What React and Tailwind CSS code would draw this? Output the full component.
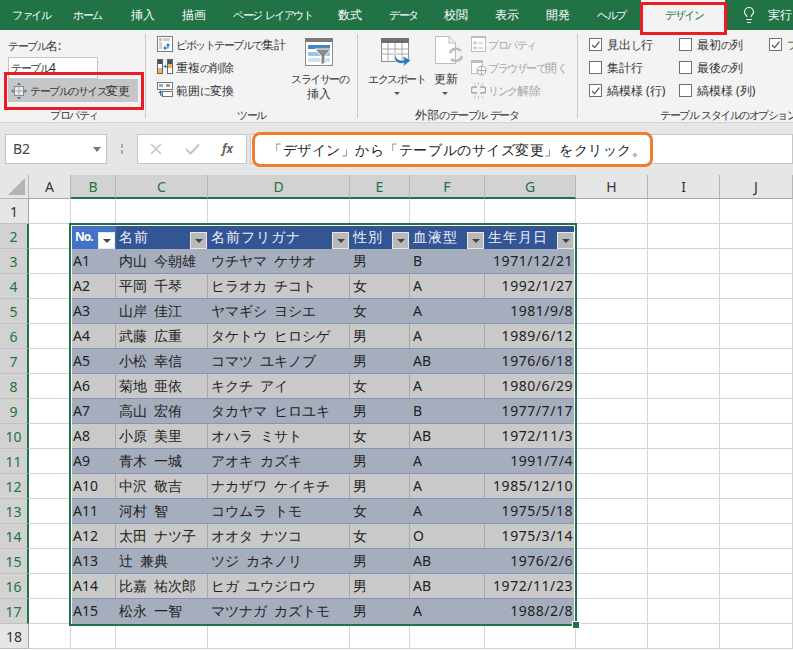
import { Lightbulb } from "lucide-react";

const font = "font-['Noto_Sans_CJK_JP','Noto_Sans',sans-serif]";

const tabs = [
  ["ファイル", 12],
  ["ホーム", 73],
  ["挿入", 131],
  ["描画", 182],
  ["ページ レイアウト", 233],
  ["数式", 338],
  ["データ", 389],
  ["校閲", 444],
  ["表示", 495],
  ["開発", 546],
  ["ヘルプ", 597],
];

const rows = [
  ["A1", "内山 今朝雄", "ウチヤマ ケサオ", "男", "B", "1971/12/21"],
  ["A2", "平岡 千琴", "ヒラオカ チコト", "女", "A", "1992/1/27"],
  ["A3", "山岸 佳江", "ヤマギシ ヨシエ", "女", "A", "1981/9/8"],
  ["A4", "武藤 広重", "タケトウ ヒロシゲ", "男", "A", "1989/6/12"],
  ["A5", "小松 幸信", "コマツ ユキノブ", "男", "AB", "1976/6/18"],
  ["A6", "菊地 亜依", "キクチ アイ", "女", "A", "1980/6/29"],
  ["A7", "高山 宏侑", "タカヤマ ヒロユキ", "男", "B", "1977/7/17"],
  ["A8", "小原 美里", "オハラ ミサト", "女", "AB", "1972/11/3"],
  ["A9", "青木 一城", "アオキ カズキ", "男", "A", "1991/7/4"],
  ["A10", "中沢 敬吉", "ナカザワ ケイキチ", "男", "A", "1985/12/10"],
  ["A11", "河村 智", "コウムラ トモ", "女", "A", "1975/5/18"],
  ["A12", "太田 ナツ子", "オオタ ナツコ", "女", "O", "1975/3/14"],
  ["A13", "辻 兼典", "ツジ カネノリ", "男", "AB", "1976/2/6"],
  ["A14", "比嘉 祐次郎", "ヒガ ユウジロウ", "男", "AB", "1972/11/23"],
  ["A15", "松永 一智", "マツナガ カズトモ", "男", "A", "1988/2/8"],
];

const heads = [
  ["No.", 44],
  ["名前", 92],
  ["名前フリガナ", 142],
  ["性別", 60],
  ["血液型", 75],
  ["生年月日", 89],
];

const colHeads = ["A", "B", "C", "D", "E", "F", "G", "H", "I", "J"];
const rowNums = Array.from({ length: 18 }, (_, i) => i + 1);

// ribbon font has narrow kana and full width kanji
const Jp = ({ text }) =>
  text.split(/([\u3040-\u30ff]+)/).map((part, i) =>
    i % 2 === 1 ? (
      <span key={i} className="text-[11px] tracking-[-1.5px]">
        {part}
      </span>
    ) : (
      <span key={i}>{part}</span>
    )
  );

const Label = ({ x, y, gray, children }) => (
  <span
    style={{ left: x, top: y }}
    className={`absolute whitespace-nowrap text-[12px] leading-[16px] ${gray ? "text-[#a6a6a6]" : "text-[#333]"}`}
  >
    <Jp text={children} />
  </span>
);

const Check = ({ x, y, on }) => (
  <span
    style={{ left: x, top: y }}
    className="absolute w-[13px] h-[13px] border border-[#707070] bg-white"
  >
    {on && (
      <svg viewBox="0 0 13 13" className="w-[13px] h-[13px] -top-px -left-px absolute">
        <path d="M3 7 L5.6 9.6 L10.4 3.6" fill="none" stroke="#555" strokeWidth="1.3" />
      </svg>
    )}
  </span>
);

const Caret = ({ x, y }) => (
  <span
    style={{ left: x, top: y }}
    className="absolute border-x-[3px] border-x-transparent border-t-[3px] border-t-[#555]"
  ></span>
);

const Sep = ({ x }) => (
  <div style={{ left: x }} className="absolute top-[34px] h-[84px] w-px bg-[#c8c8c8]"></div>
);

const PivotIcon = () => (
  <svg className="absolute left-[157px] top-[36px]" width="16" height="16" viewBox="0 0 16 16">
    <rect x="0.5" y="0.5" width="15" height="15" fill="#fff" stroke="#7a7a7a" />
    <rect x="2" y="2" width="3" height="3" fill="#bdbdbd" />
    <rect x="2" y="6" width="3" height="7" fill="#d0d0d0" />
    <rect x="6" y="2" width="7" height="3" fill="#d0d0d0" />
    <path d="M7 12 H11 V8 M9.5 9.5 L11 8 L12.5 9.5 M8.5 10.5 L7 12 L8.5 13.5" fill="none" stroke="#2f75b5" strokeWidth="1.2" />
  </svg>
);

const DupIcon = () => (
  <svg className="absolute left-[157px] top-[59px]" width="16" height="15" viewBox="0 0 16 15">
    <rect x="0.5" y="0.5" width="5" height="14" fill="#fff" stroke="#666" />
    <rect x="10.5" y="0.5" width="5" height="14" fill="#fff" stroke="#666" />
    <rect x="1" y="1" width="4" height="4" fill="#44546a" />
    <rect x="1" y="9" width="4" height="5" fill="#e9b362" />
    <rect x="11" y="1" width="4" height="4" fill="#44546a" />
    <rect x="11" y="5" width="4" height="4" fill="#e9b362" />
    <path d="M6.5 7.5 H9.5 M8.2 6 L9.5 7.5 L8.2 9" fill="none" stroke="#2f75b5" />
  </svg>
);

const RangeIcon = () => (
  <svg className="absolute left-[157px] top-[82px]" width="16" height="16" viewBox="0 0 16 16">
    <rect x="0.5" y="0.5" width="15" height="7" fill="#fff" stroke="#777" />
    <rect x="2" y="2" width="4" height="3" fill="#8faadc" />
    <rect x="9" y="2" width="4" height="3" fill="#9a9a9a" />
    <rect x="5.5" y="9.5" width="10" height="5" fill="#fff" stroke="#777" />
    <path d="M3.5 9 V13 H6 M1.8 11 L3.5 9 L5.2 11" fill="none" stroke="#2f75b5" strokeWidth="1.1" />
  </svg>
);

const SlicerIcon = () => (
  <svg className="absolute left-[305px] top-[38px]" width="28" height="28" viewBox="0 0 28 28">
    <rect x="0.5" y="0.5" width="27" height="27" fill="#fff" stroke="#8c8c8c" />
    <rect x="0" y="0" width="28" height="4" fill="#7a7a7a" />
    <rect x="3" y="7" width="22" height="4" fill="#4a86c0" />
    <rect x="3" y="14" width="22" height="4" fill="#9dc3e6" />
    <rect x="3" y="20" width="22" height="4" fill="#cfe0f1" />
    <path d="M10 11 H26 L20 18 V25 L16 27 V18 Z" fill="#8a8a8a" stroke="#fff" />
  </svg>
);

const ExportIcon = () => (
  <svg className="absolute left-[381px] top-[38px]" width="32" height="30" viewBox="0 0 32 30">
    <rect x="0.5" y="0.5" width="27" height="23" fill="#fff" stroke="#8c8c8c" />
    <rect x="0" y="0" width="28" height="5" fill="#6f6f6f" />
    <path d="M0 11 H28 M0 16 H28 M7 5 V24 M14 5 V24 M21 5 V24" stroke="#a6a6a6" />
    <path d="M14 15 C15 22 19 23 23 22 L21 18 L30 22 L22 29 L23 25 C17 27 12 23 14 15 Z" fill="#2f75b5" stroke="#fff" strokeWidth="0.6" />
  </svg>
);

const RefreshIcon = () => (
  <svg className="absolute left-[435px] top-[36px]" width="28" height="30" viewBox="0 0 28 30">
    <path d="M0.5 0.5 H14 L20.5 7 V27.5 H0.5 Z M14 0.5 V7 H20.5" fill="#fff" stroke="#bdbdbd" />
    <path d="M15 17 A6.5 6.5 0 0 1 26 15 M27 20 A6.5 6.5 0 0 1 16 23" fill="none" stroke="#bdbdbd" strokeWidth="2.6" />
  </svg>
);

const SmallGrayIcons = () => (
  <>
    <svg className="absolute left-[471px] top-[36px]" width="15" height="16" viewBox="0 0 15 16">
      <rect x="0.5" y="0.5" width="14" height="15" fill="#fff" stroke="#bdbdbd" />
      <rect x="0" y="0" width="15" height="2" fill="#bdbdbd" />
      <path d="M3 6 H5 V8 H3 Z M3 11 H5 V13 H3 Z M7 7 H12 M7 12 H12" fill="none" stroke="#bdbdbd" />
    </svg>
    <svg className="absolute left-[471px] top-[60px]" width="16" height="16" viewBox="0 0 16 16">
      <rect x="0.5" y="0.5" width="11" height="13" fill="#fff" stroke="#bdbdbd" />
      <rect x="0" y="0" width="12" height="3" fill="#bdbdbd" />
      <circle cx="10.5" cy="10.5" r="4.5" fill="#fff" stroke="#a6a6a6" />
      <path d="M6 10.5 H15 M10.5 6 V15" stroke="#a6a6a6" />
    </svg>
    <svg className="absolute left-[471px] top-[82px]" width="15" height="17" viewBox="0 0 15 17">
      <path d="M7.5 0 V3 M3 1 L4.5 3.5 M12 1 L10.5 3.5 M7.5 14 V17 M3 16 L4.5 13.5 M12 16 L10.5 13.5" stroke="#bdbdbd" />
      <path d="M6 5 H3 A3 3 0 0 0 3 11 H6 M9 5 H12 A3 3 0 0 1 12 11 H9" fill="none" stroke="#a6a6a6" strokeWidth="1.6" />
    </svg>
  </>
);

const ResizeIcon = () => (
  <svg className="absolute left-[11px] top-[82px]" width="16" height="18" viewBox="0 0 16 18">
    <rect x="3.5" y="4.5" width="9" height="9" fill="#eee" stroke="#8a8a8a" />
    <path d="M3.5 9 H12.5 M8 4.5 V13.5" stroke="#a6a6a6" />
    <path d="M8 0.5 L6 3 H10 Z M8 17.5 L6 15 H10 Z M0 9 L2.5 7 V11 Z M16 9 L13.5 7 V11 Z" fill="#2f75b5" />
  </svg>
);

const FilterBtn = ({ white, last }) => (
  <span
    className={`absolute top-[6px] w-[17px] h-[17px] flex items-center justify-center border border-[#e8e8e8] ${last ? "right-0" : "right-[1px]"} ${white ? "bg-white" : "bg-[#b9b9b9]"}`}
  >
    <span className="border-x-[4px] border-x-transparent border-t-[4px] border-t-[#444]"></span>
  </span>
);

const App = () => {
  return (
    <div className={`relative w-[793px] h-[650px] overflow-hidden bg-[#e6e6e6] text-[#333] ${font}`}>
      {/* tabs */}
      <div className="absolute left-0 top-0 w-[793px] h-[30px] bg-[#217346]"></div>
      {tabs.map(([t, x]) => (
        <span
          key={t}
          style={{ left: x }}
          className="absolute top-[6px] text-[12px] leading-[18px] text-white whitespace-nowrap"
        >
          <Jp text={t} />
        </span>
      ))}
      <div className="absolute left-0 top-[30px] w-[793px] h-[93px] bg-[#f3f3f3] border-b border-[#d4d4d4]"></div>
      <div className="absolute left-[641px] top-0 w-[84px] h-[30px] bg-[#f3f3f3]"></div>
      <span className="absolute left-[665px] top-[6px] text-[12px] leading-[18px] text-[#217346]">
        <Jp text="デザイン" />
      </span>
      <div className="absolute left-[640px] top-[2px] w-[87px] h-[33px] border-[3px] border-[#ed1c24]"></div>
      <Lightbulb className="absolute left-[740px] top-[6px] text-white" size={18} strokeWidth={1.5} />
      <span className="absolute left-[768px] top-[6px] text-[12px] leading-[18px] text-white whitespace-nowrap">実行</span>

      {/* table name group */}
      <Label x={8} y={38}>テーブル名:</Label>
      <div className="absolute left-[8px] top-[57px] w-[90px] h-[22px] bg-white border border-[#c6c6c6]"></div>
      <Label x={11} y={60}>テーブル4</Label>
      <div className="absolute left-[8px] top-[79px] w-[130px] h-[23px] bg-[#c6c6c6]"></div>
      <ResizeIcon />
      <Label x={30} y={83}>テーブルのサイズ変更</Label>
      <div className="absolute left-[4px] top-[72px] w-[140px] h-[38px] border-[3px] border-[#ed1c24]"></div>
      <Label x={50} y={107}>プロパティ</Label>
      <Sep x={145} />

      {/* tools */}
      <PivotIcon />
      <DupIcon />
      <RangeIcon />
      <Label x={176} y={37}>ピボットテーブルで集計</Label>
      <Label x={176} y={60}>重複の削除</Label>
      <Label x={176} y={83}>範囲に変換</Label>
      <SlicerIcon />
      <Label x={291} y={71}>スライサーの</Label>
      <Label x={307} y={86}>挿入</Label>
      <Label x={237} y={107}>ツール</Label>
      <Sep x={357} />

      {/* external data */}
      <ExportIcon />
      <RefreshIcon />
      <SmallGrayIcons />
      <Label x={368} y={71}>エクスポート</Label>
      <Caret x={394} y={92} />
      <Label x={434} y={71}>更新</Label>
      <Caret x={442} y={92} />
      <Label x={488} y={37} gray>プロパティ</Label>
      <Label x={488} y={60} gray>ブラウザーで開く</Label>
      <Label x={488} y={83} gray>リンク解除</Label>
      <Label x={415} y={107}>外部のテーブル データ</Label>
      <Sep x={577} />

      {/* style options */}
      <Check x={589} y={38} on />
      <Check x={589} y={61} />
      <Check x={589} y={84} on />
      <Check x={679} y={38} />
      <Check x={679} y={61} />
      <Check x={679} y={84} />
      <Check x={769} y={38} on />
      <Label x={607} y={37}>見出し行</Label>
      <Label x={607} y={60}>集計行</Label>
      <Label x={607} y={83}>縞模様 (行)</Label>
      <Label x={697} y={37}>最初の列</Label>
      <Label x={697} y={60}>最後の列</Label>
      <Label x={697} y={83}>縞模様 (列)</Label>
      <Label x={787} y={37}>フ</Label>
      <Label x={660} y={107}>テーブル スタイルのオプション</Label>

      {/* formula bar */}
      <div className="absolute left-[5px] top-[134px] w-[102px] h-[30px] bg-white border border-[#c6c6c6]"></div>
      <span className="absolute left-[13px] top-[139px] text-[14px] leading-[20px] text-[#444]">B2</span>
      <span className="absolute left-[93px] top-[147px] border-x-[4px] border-x-transparent border-t-[5px] border-t-[#777]"></span>
      <span className="absolute left-[121px] top-[144px] w-[2px] h-[10px] border-y-[4px] border-[#aaa] bg-[#e6e6e6]"></span>
      <div className="absolute left-[137px] top-[134px] w-[110px] h-[30px] bg-white border border-[#c6c6c6]"></div>
      <svg className="absolute left-[150px] top-[143px]" width="12" height="12" viewBox="0 0 12 12">
        <path d="M1 1 L11 11 M11 1 L1 11" stroke="#c6c6c6" strokeWidth="1.6" />
      </svg>
      <svg className="absolute left-[185px] top-[143px]" width="15" height="12" viewBox="0 0 15 12">
        <path d="M1 6 L5.5 10.5 L14 1.5" fill="none" stroke="#c6c6c6" strokeWidth="2" />
      </svg>
      <span className="absolute left-[222px] top-[139px] font-['Liberation_Serif',serif] italic font-bold text-[12px] leading-[20px] text-[#666]">fx</span>
      <div className="absolute left-[250px] top-[134px] w-[543px] h-[30px] bg-white border border-[#c6c6c6]"></div>
      <div className="absolute left-[252px] top-[132px] w-[401px] h-[35px] rounded-[8px] border-[3px] border-[#ed7d31] bg-white"></div>
      <span className="absolute left-[268px] top-[139px] text-[14px] leading-[21px] tracking-[0.55px] text-[#222] whitespace-nowrap">「デザイン」から「テーブルのサイズ変更」をクリック。</span>

      {/* sheet */}
      <div className="absolute left-0 top-[175px] w-[793px] h-[475px] grid grid-cols-[29px_42px_45px_92px_142px_60px_75px_91px_72px_72px_73px] grid-rows-[24px_repeat(18,25px)] bg-white">
        <div className="relative bg-[#e6e6e6] border-r border-b border-[#b5b5b5]">
          <span className="absolute right-[3px] bottom-[3px] border-l-[17px] border-l-transparent border-b-[17px] border-b-[#b4b4b4]"></span>
        </div>
        {colHeads.map((c, i) => {
          const on = i >= 1 && i <= 6;
          return (
            <div
              key={c}
              className={`flex items-center justify-center text-[14px] border-r border-[#b5b5b5] ${on ? "bg-[#d2d2d2] text-[#217346] border-b-2 border-b-[#217346]" : "bg-[#e6e6e6] text-[#333] border-b border-b-[#a6a6a6]"}`}
            >
              {c}
            </div>
          );
        })}
        {rowNums.map((n) => {
          const on = n >= 2 && n <= 17;
          return (
            <div key={n} className="contents">
              <div
                className={`flex items-center justify-center text-[14px] border-b border-[#c0c0c0] ${on ? "bg-[#d2d2d2] text-[#217346] border-r-2 border-r-[#217346]" : "bg-[#e6e6e6] text-[#333] border-r border-r-[#a6a6a6]"}`}
              >
                {n}
              </div>
              {colHeads.map((c) => (
                <div key={c} className="border-r border-b border-[#d4d4d4]"></div>
              ))}
            </div>
          );
        })}
      </div>

      {/* table */}
      <div className="absolute left-[69px] top-[223px] w-[508px] h-[403px] border-2 border-[#217346] bg-white p-px overflow-hidden">
        <div className="flex h-[23px] bg-[#335593] text-white">
          {heads.map(([h, w], i) => (
            <div
              key={h}
              style={{ width: w }}
              className={`relative shrink-0 ${i === 0 ? "bg-[#4472c4]" : ""}`}
            >
              {i === 0 ? (
                <span className="absolute left-[3px] top-[2px] text-[12px] font-bold leading-[18px] tracking-[-1px]">{h}</span>
              ) : (
                <span className="absolute left-[3px] top-px text-[14px] leading-[20px] tracking-[1px] text-[#eef]">{h}</span>
              )}
              <FilterBtn white={i === 0} last={i === 5} />
            </div>
          ))}
        </div>
        {rows.map((r, i) => (
          <div
            key={r[0]}
            className={`flex h-[25px] border-b border-[#8497b8] last:border-b-0 text-[14px] leading-[24px] text-[#222] [word-spacing:3px] ${i % 2 === 0 ? "bg-[#a6adbd]" : "bg-[#c9c9c9]"}`}
          >
            {r.map((v, j) => (
              <div
                key={j}
                style={{ width: heads[j][1] }}
                className={`shrink-0 whitespace-nowrap ${j === 0 ? "pl-px" : "pl-[3px]"} ${j === 5 ? "text-right pr-px tracking-[0.55px]" : ""} ${i % 2 === 1 && j < 5 ? "border-r border-[#a8a8a8]" : ""}`}
              >
                {v}
              </div>
            ))}
          </div>
        ))}
      </div>
      <div className="absolute left-[572px] top-[621px] w-[8px] h-[8px] bg-[#217346] border border-white"></div>
    </div>
  );
};

export default App;
